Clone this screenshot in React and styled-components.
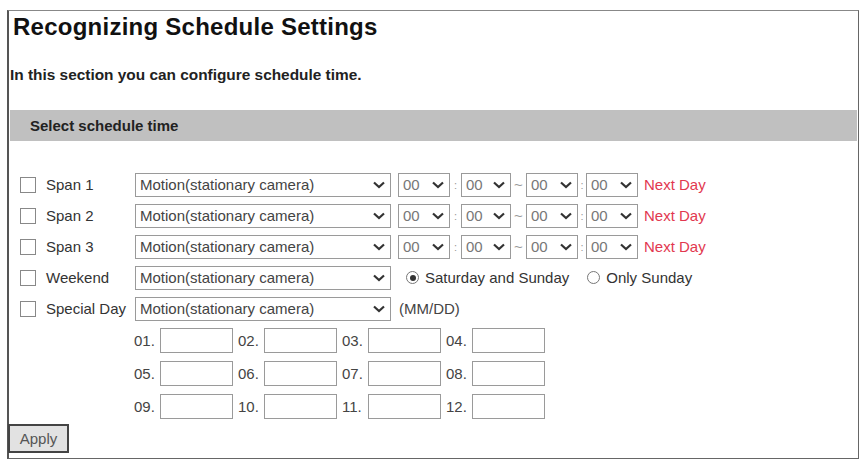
import React from 'react';
import styled, { createGlobalStyle } from 'styled-components';

const GlobalStyle = createGlobalStyle`
    body {
        margin: 0;
        background: #fff;
        font-family: "Liberation Sans", Arial, sans-serif;
        color: #333;
    }
`;

const Frame = styled.div`
    box-sizing: border-box;
    margin: 10px 0 0 7px;
    width: 852px;
    height: 449px;
    border: 1px solid #666;
    border-top-color: #888;
    border-left-width: 2px;
    border-left-color: #555;
    display: flex;
    flex-direction: column;
`;

const Title = styled.h1`
    margin: 2px 0 0 4px;
    font-size: 24px;
    line-height: 28px;
    font-weight: 700;
    letter-spacing: 0.25px;
    color: #111;
`;

const Intro = styled.p`
    margin: 25px 0 0 1px;
    font-size: 15.4px;
    line-height: 18px;
    font-weight: 700;
    color: #222;
`;

const SectionBar = styled.div`
    margin: 26px 1px 0 1px;
    height: 31px;
    background: #c0c0c0;
    display: flex;
    align-items: center;
    padding-left: 20px;
    font-size: 15px;
    font-weight: 700;
    color: #222;
`;

const Rows = styled.div`
    margin-top: 28px;
    display: flex;
    flex-direction: column;
`;

const Row = styled.div`
    height: 31px;
    display: flex;
    align-items: center;
    padding-left: 11px;
    font-size: 15px;
`;

const CheckCell = styled.label`
    width: 115px;
    display: flex;
    align-items: center;
    gap: 10px;
    color: #333;
    white-space: nowrap;
`;

const Box = styled.span`
    box-sizing: border-box;
    width: 16px;
    height: 16px;
    border: 1px solid #888;
    background: #fff;
    flex: none;
`;

const SelectBox = styled.div`
    box-sizing: border-box;
    width: ${(p) => p.$w}px;
    height: 24px;
    margin-left: ${(p) => p.$ml || 0}px;
    border: 1px solid #9a9a9a;
    background: #fff;
    display: flex;
    align-items: center;
    justify-content: space-between;
    padding: 0 5px 0 4px;
    color: ${(p) => (p.$light ? '#777' : '#444')};
    white-space: nowrap;
`;

const Sep = styled.span`
    width: ${(p) => p.$w}px;
    text-align: center;
    color: #999;
    font-size: ${(p) => p.$size || 15}px;
`;

const NextDay = styled.span`
    margin-left: 6px;
    color: #e2384f;
`;

const Radio = styled.span`
    box-sizing: border-box;
    width: 13px;
    height: 13px;
    border-radius: 50%;
    border: 1px solid #777;
    background: #fff;
    margin-left: ${(p) => p.$ml}px;
    margin-right: 6px;
    display: flex;
    align-items: center;
    justify-content: center;
    &::after {
        content: '';
        width: 6px;
        height: 6px;
        border-radius: 50%;
        background: ${(p) => (p.$on ? '#333' : 'transparent')};
    }
`;

const Hint = styled.span`
    margin-left: 8px;
    color: #444;
`;

const DateRow = styled.div`
    height: 33px;
    display: flex;
    align-items: center;
    padding-left: 125px;
    gap: 5px;
    font-size: 15px;
`;

const DateCell = styled.label`
    display: flex;
    align-items: center;
    color: #444;
`;

const DateNum = styled.span`
    width: 26px;
`;

const DateInput = styled.input`
    box-sizing: border-box;
    width: 73px;
    height: 25px;
    border: 1px solid #9a9a9a;
    margin: 0;
    padding: 0 3px;
    font: inherit;
`;

const ApplyButton = styled.button`
    box-sizing: border-box;
    margin: 1px 0 0 -1px;
    width: 61px;
    height: 29px;
    border: 2px solid #444;
    background: #e2e2e2;
    font-family: "Liberation Sans", Arial, sans-serif;
    font-size: 15px;
    color: #555;
    padding: 0;
`;

const Chevron = () => (
    <svg width="12" height="8" viewBox="0 0 12 8">
        <path d="M1 1.5 L6 6 L11 1.5" fill="none" stroke="#333" strokeWidth="2.2" />
    </svg>
);

const Select = ({ w, ml, light, children }) => (
    <SelectBox $w={w} $ml={ml} $light={light}>
        <span>{children}</span>
        <Chevron />
    </SelectBox>
);

const MODE = 'Motion(stationary camera)';

const Check = ({ label }) => (
    <CheckCell>
        <Box />
        {label}
    </CheckCell>
);

const SpanRow = ({ label }) => (
    <Row>
        <Check label={label} />
        <Select w={256}>{MODE}</Select>
        <Select w={52} ml={7} light>00</Select>
        <Sep $w={11} $size={11}>:</Sep>
        <Select w={50} light>00</Select>
        <Sep $w={15}>~</Sep>
        <Select w={52} light>00</Select>
        <Sep $w={8} $size={11}>:</Sep>
        <Select w={52} light>00</Select>
        <NextDay>Next Day</NextDay>
    </Row>
);

const dates = [
    ['01', '02', '03', '04'],
    ['05', '06', '07', '08'],
    ['09', '10', '11', '12'],
];

const App = () => {
    return (
        <>
            <GlobalStyle />
            <Frame>
                <Title>Recognizing Schedule Settings</Title>
                <Intro>In this section you can configure schedule time.</Intro>
                <SectionBar>Select schedule time</SectionBar>
                <Rows>
                    <SpanRow label="Span 1" />
                    <SpanRow label="Span 2" />
                    <SpanRow label="Span 3" />
                    <Row>
                        <Check label="Weekend" />
                        <Select w={256}>{MODE}</Select>
                        <Radio $ml={15} $on />
                        Saturday and Sunday
                        <Radio $ml={18} />
                        Only Sunday
                    </Row>
                    <Row>
                        <Check label="Special Day" />
                        <Select w={256}>{MODE}</Select>
                        <Hint>(MM/DD)</Hint>
                    </Row>
                    {dates.map((row) => (
                        <DateRow key={row[0]}>
                            {row.map((d) => (
                                <DateCell key={d}>
                                    <DateNum>{d}.</DateNum>
                                    <DateInput type="text" />
                                </DateCell>
                            ))}
                        </DateRow>
                    ))}
                </Rows>
                <div>
                    <ApplyButton>Apply</ApplyButton>
                </div>
            </Frame>
        </>
    );
};

export default App;
